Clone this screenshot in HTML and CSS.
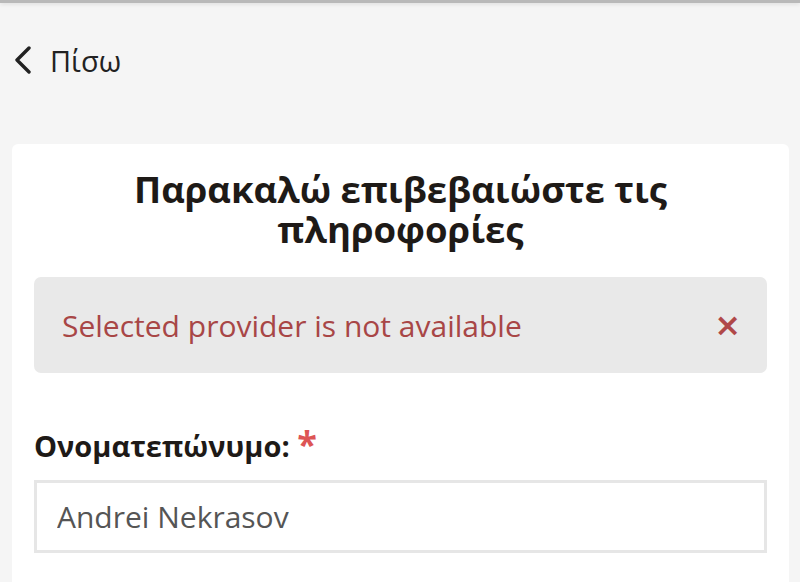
FILE: index.html
```html
<html lang="el">
  <head>
    <meta charset="UTF-8" />
    <meta name="viewport" content="width=device-width, initial-scale=1.0" />
    <title>Επιβεβαίωση</title>
    <link rel="stylesheet" href="styles.css">
  </head>
  <body>
    <div class="topbar"></div>
    <a class="back" href="#">
      <svg class="back-icon" width="18" height="28" viewBox="0 0 18 28">
        <path d="M15 2 L3 14 L15 26" fill="none" stroke="#222" stroke-width="3.4" stroke-linecap="round" stroke-linejoin="round" />
      </svg>
      <span>Πίσω</span>
    </a>

    <div class="card">
      <h1>Παρακαλώ επιβεβαιώστε τις πληροφορίες</h1>

      <div class="alert">
        <span>Selected provider is not available</span>
        <button class="alert-close" type="button">×</button>
      </div>

      <div class="field">
        <label for="fullname">Ονοματεπώνυμο: <span class="required">*</span></label>
        <input id="fullname" name="fullname" type="text" value="Andrei Nekrasov" />
      </div>
    </div>
  </body>
</html>
```

FILE: styles.css
```css
body {
  margin: 0;
  background: #f5f5f5;
  font-family: "Open Sans", "Noto Sans", sans-serif;
  color: #1e1a17;
}

.topbar {
  height: 3px;
  background: #b9b9b9;
  box-shadow: 0 1px 4px rgba(0, 0, 0, 0.12);
}

.back {
  display: flex;
  align-items: center;
  gap: 18px;
  padding: 37px 14px 0 14px;
  height: 40px;
  color: #222;
  text-decoration: none;
  font-size: 29px;
}

.back-icon {
  display: block;
}

.card {
  margin: 64px 11px 0 12px;
  padding: 25px 22px 40px 22px;
  background: #fff;
  border-radius: 6px;
}

.card h1 {
  margin: 0 auto 28px auto;
  max-width: 600px;
  text-align: center;
  font-size: 36.5px;
  line-height: 40px;
  font-weight: 700;
  color: #1e1a17;
}

.alert {
  display: flex;
  align-items: center;
  justify-content: space-between;
  height: 96px;
  padding: 0 26px 0 28px;
  background: #e9e9e9;
  border-radius: 7px;
  color: #a84646;
  font-size: 30px;
  box-sizing: border-box;
}

.alert-close {
  border: none;
  background: none;
  padding: 0;
  color: #b04848;
  font-family: "DejaVu Sans", sans-serif;
  font-size: 32px;
  font-weight: 700;
  cursor: pointer;
}

.field {
  margin-top: 53px;
}

.field label {
  display: block;
  font-size: 29px;
  line-height: 36px;
  font-weight: 700;
  margin-bottom: 16px;
  color: #1e1a17;
}

.field .required {
  color: #dd5555;
  font-size: 36px;
  line-height: 36px;
}

.field input {
  display: block;
  width: 100%;
  height: 73px;
  box-sizing: border-box;
  border: 3px solid #e6e6e6;
  padding: 0 20px;
  font-family: "Open Sans", sans-serif;
  font-size: 30px;
  color: #555;
}

.field input:focus {
  outline: 0;
}
```
